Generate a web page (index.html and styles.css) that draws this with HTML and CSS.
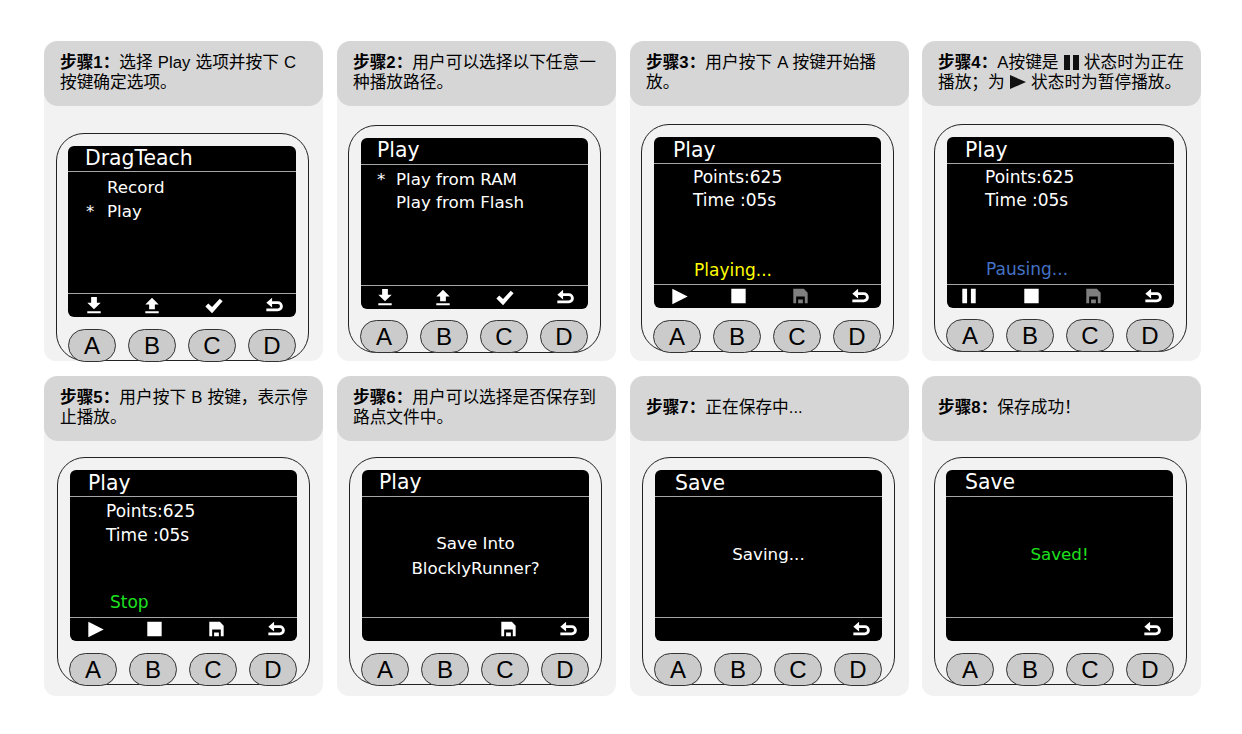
FILE: index.html
```html
<!DOCTYPE html>
<html lang="zh-CN">
<head>
<meta charset="utf-8">
<title>DragTeach</title>
<link rel="stylesheet" href="styles.css">
</head>
<body>
<svg class="sprite" aria-hidden="true">
  <symbol id="i-down" viewBox="0 0 24 24"><path d="M9 3h6v6h4l-7 7-7-7h4zM5 18h14v2H5z"/></symbol>
  <symbol id="i-up" viewBox="0 0 24 24"><path d="M12 4l7 7h-4v5H9v-5H5zM5 18h14v2H5z"/></symbol>
  <symbol id="i-check" viewBox="0 0 24 24"><path d="M3 13l3-3 4 3.500L18 5l3 2.500L10 20z"/></symbol>
  <symbol id="i-back" viewBox="0 0 24 24"><path d="M10 4v3.500h6a5.200 5.200 0 0 1 0 10.500H4v-3h12a2.200 2.200 0 0 0 0-4.500h-6V14L4 9z"/></symbol>
  <symbol id="i-play" viewBox="0 0 24 24"><path d="M4 4l16 8-16 8z"/></symbol>
  <symbol id="i-stop" viewBox="0 0 24 24"><path d="M5 4h15v15H5z"/></symbol>
  <symbol id="i-pause" viewBox="0 0 24 24"><path d="M5 4h5v15H5zM14 4h5v15h-5z"/></symbol>
  <symbol id="i-save" viewBox="0 0 24 24"><path fill-rule="evenodd" d="M5 4h11l4 4v11H5zM8 12v7h9v-7zM10 15h5v4h-5z"/></symbol>
  <symbol id="i-hpause" viewBox="0 0 15 15"><path d="M0 0h6v15H0zM9 0h6v15H9z"/></symbol>
  <symbol id="i-hplay" viewBox="0 0 16 14"><path d="M0 0l16 7-16 7z"/></symbol>
</svg>

<main class="board">

<section class="card">
  <div class="head"><p><b>步骤1：</b>选择 Play 选项并按下 C<br>按键确定选项。</p></div>
  <div class="device d1">
    <div class="screen">
      <div class="title t1">DragTeach</div>
      <div class="body b1">
        <div class="line"><span class="star"></span>Record</div>
        <div class="line"><span class="star">*</span>Play</div>
      </div>
      <div class="keys">
        <svg class="key"><use href="#i-down"/></svg>
        <svg class="key"><use href="#i-up"/></svg>
        <svg class="key"><use href="#i-check"/></svg>
        <svg class="key"><use href="#i-back"/></svg>
      </div>
    </div>
    <div class="buttons"><span class="btn">A</span><span class="btn">B</span><span class="btn">C</span><span class="btn">D</span></div>
  </div>
</section>

<section class="card">
  <div class="head"><p><b>步骤2：</b>用户可以选择以下任意一<br>种播放路径。</p></div>
  <div class="device d2">
    <div class="screen">
      <div class="title t2">Play</div>
      <div class="body b2">
        <div class="line"><span class="star">*</span>Play from RAM</div>
        <div class="line"><span class="star"></span>Play from Flash</div>
      </div>
      <div class="keys">
        <svg class="key"><use href="#i-down"/></svg>
        <svg class="key"><use href="#i-up"/></svg>
        <svg class="key"><use href="#i-check"/></svg>
        <svg class="key"><use href="#i-back"/></svg>
      </div>
    </div>
    <div class="buttons"><span class="btn">A</span><span class="btn">B</span><span class="btn">C</span><span class="btn">D</span></div>
  </div>
</section>

<section class="card">
  <div class="head"><p><b>步骤3：</b>用户按下 A 按键开始播<br>放。</p></div>
  <div class="device d3">
    <div class="screen">
      <div class="title t3">Play</div>
      <div class="body b3">
        <div class="line">Points:625</div>
        <div class="line">Time :05s</div>
        <div class="status yellow">Playing...</div>
      </div>
      <div class="keys">
        <svg class="key"><use href="#i-play"/></svg>
        <svg class="key"><use href="#i-stop"/></svg>
        <svg class="key dim"><use href="#i-save"/></svg>
        <svg class="key"><use href="#i-back"/></svg>
      </div>
    </div>
    <div class="buttons"><span class="btn">A</span><span class="btn">B</span><span class="btn">C</span><span class="btn">D</span></div>
  </div>
</section>

<section class="card">
  <div class="head"><p><b>步骤4：</b>A按键是 <svg class="inline"><use href="#i-hpause"/></svg> 状态时为正在<br>播放；为 <svg class="inline wide"><use href="#i-hplay"/></svg> 状态时为暂停播放。</p></div>
  <div class="device d4">
    <div class="screen">
      <div class="title t4">Play</div>
      <div class="body b3 b4">
        <div class="line">Points:625</div>
        <div class="line">Time :05s</div>
        <div class="status blue">Pausing...</div>
      </div>
      <div class="keys">
        <svg class="key nudge"><use href="#i-pause"/></svg>
        <svg class="key"><use href="#i-stop"/></svg>
        <svg class="key dim"><use href="#i-save"/></svg>
        <svg class="key"><use href="#i-back"/></svg>
      </div>
    </div>
    <div class="buttons"><span class="btn">A</span><span class="btn">B</span><span class="btn">C</span><span class="btn">D</span></div>
  </div>
</section>

<section class="card">
  <div class="head"><p><b>步骤5：</b>用户按下 B 按键，表示停<br>止播放。</p></div>
  <div class="device d5">
    <div class="screen">
      <div class="title t5">Play</div>
      <div class="body b5">
        <div class="line">Points:625</div>
        <div class="line">Time :05s</div>
        <div class="status green">Stop</div>
      </div>
      <div class="keys">
        <svg class="key"><use href="#i-play"/></svg>
        <svg class="key"><use href="#i-stop"/></svg>
        <svg class="key"><use href="#i-save"/></svg>
        <svg class="key"><use href="#i-back"/></svg>
      </div>
    </div>
    <div class="buttons"><span class="btn">A</span><span class="btn">B</span><span class="btn">C</span><span class="btn">D</span></div>
  </div>
</section>

<section class="card">
  <div class="head"><p><b>步骤6：</b>用户可以选择是否保存到<br>路点文件中。</p></div>
  <div class="device d6">
    <div class="screen">
      <div class="title t6">Play</div>
      <div class="body centered">
        <div class="line2">Save Into</div>
        <div class="line2">BlocklyRunner?</div>
      </div>
      <div class="keys">
        <span class="key"></span>
        <span class="key"></span>
        <svg class="key"><use href="#i-save"/></svg>
        <svg class="key"><use href="#i-back"/></svg>
      </div>
    </div>
    <div class="buttons"><span class="btn">A</span><span class="btn">B</span><span class="btn">C</span><span class="btn">D</span></div>
  </div>
</section>

<section class="card">
  <div class="head"><p><b>步骤7：</b>正在保存中...</p></div>
  <div class="device d7">
    <div class="screen">
      <div class="title t7">Save</div>
      <div class="body centered solo">
        <div class="line2">Saving...</div>
      </div>
      <div class="keys">
        <span class="key"></span>
        <span class="key"></span>
        <span class="key"></span>
        <svg class="key"><use href="#i-back"/></svg>
      </div>
    </div>
    <div class="buttons"><span class="btn">A</span><span class="btn">B</span><span class="btn">C</span><span class="btn">D</span></div>
  </div>
</section>

<section class="card">
  <div class="head"><p><b>步骤8：</b>保存成功！</p></div>
  <div class="device d8">
    <div class="screen">
      <div class="title t8">Save</div>
      <div class="body centered solo">
        <div class="line2 green">Saved!</div>
      </div>
      <div class="keys">
        <span class="key"></span>
        <span class="key"></span>
        <span class="key"></span>
        <svg class="key"><use href="#i-back"/></svg>
      </div>
    </div>
    <div class="buttons"><span class="btn">A</span><span class="btn">B</span><span class="btn">C</span><span class="btn">D</span></div>
  </div>
</section>

</main>
</body>
</html>
```
FILE: styles.css
```css
* { box-sizing: border-box; }
html, body { margin: 0; padding: 0; background: #fff; }
body { width: 1242px; height: 734px; overflow: hidden; font-family: "Liberation Sans", "Noto Sans CJK SC", sans-serif; color: #000; }
.sprite { display: none; }

.board {
  display: grid;
  grid-template-columns: repeat(4, 279px);
  grid-template-rows: repeat(2, 320px);
  column-gap: 14px;
  row-gap: 15px;
  padding: 41px 0 0 44px;
}

.card { background: #f2f2f2; border-radius: 12px; width: 279px; }
.card:nth-child(4n) { margin-left: -1px; }

.head {
  height: 65px;
  background: #d6d6d6;
  border-radius: 14px;
  padding: 0 16px;
  display: flex;
  align-items: center;
  font-size: 16.700px;
  line-height: 20px;
  word-spacing: 0.500px;
}
.head p { margin: -1px 0 0; white-space: nowrap; }
.head b { font-weight: 700; }
.inline { width: 15px; height: 15px; vertical-align: -2px; fill: #111; }
.wide { width: 16px; height: 14px; vertical-align: -1px; }

.device {
  width: 253px;
  height: 228px;
  border: 1px solid #222;
  border-radius: 28px;
  padding: 12px 11px 0;
}
.d1 { margin: 27px 0 0 12px; }
.d2 { margin: 19px 0 0 11px; }
.d3 { margin: 18px 0 0 11px; }
.d4 { margin: 18px 0 0 12px; }
.d5 { margin: 16px 0 0 13px; }
.d6 { margin: 16px 0 0 12px; }
.d7 { margin: 16px 0 0 12px; }
.d8 { margin: 16px 0 0 12px; }

.screen {
  width: 227px;
  height: 171px;
  margin-left: 1px;
  background: #000;
  border-radius: 6px;
  color: #fff;
  display: flex;
  flex-direction: column;
  overflow: hidden;
  font-family: "DejaVu Sans", sans-serif;
  font-size: 16.700px;
}
.d1 .screen { width: 228px; margin-left: 0; }
.d8 .screen { margin-left: 0; }

.title {
  height: 27px;
  flex: none;
  border-bottom: 1px solid #a6a6a6;
  font-size: 20.400px;
  line-height: 25px;
  padding-left: 16px;
}
.t1 { height: 26px; padding-left: 17px; }
.t3 { padding-left: 19px; line-height: 27px; }
.t4 { padding-left: 18px; line-height: 27px; }
.t5 { padding-left: 18px; line-height: 27px; }
.t6 { padding-left: 17px; }
.t7 { padding-left: 20px; line-height: 27px; }
.t8 { padding-left: 19px; }

.body { flex: 1; display: flex; flex-direction: column; min-height: 0; }
.line { line-height: 24px; white-space: nowrap; display: flex; }
.star { width: 39px; padding-left: 18px; flex: none; }
.b1 { padding-top: 3px; }
.b2 { padding-top: 3px; }
.b2 .line { line-height: 23px; }
.b2 .star { width: 35px; padding-left: 16px; }
.b3 { padding: 2px 0 2px 39px; font-size: 17px; }
.b4 { padding: 2px 0 3px 38px; }
.b3 .line { line-height: 23px; }
.b5 { padding: 2px 0 3px 36px; font-size: 17px; }
.status { margin-top: auto; line-height: 24px; padding-left: 1px; }
.b5 .status { padding-left: 4px; }
.yellow { color: #ffff00; }
.blue { color: #4472c4; }
.green { color: #1fe01f; }

.centered { align-items: center; justify-content: center; padding-bottom: 2px; }
.solo { padding-bottom: 5px; }
.line2 { line-height: 25px; }

.keys {
  flex: none;
  height: 24px;
  border-top: 1px solid #a6a6a6;
  display: grid;
  grid-template-columns: 60px 56px 68px 52px;
  margin: 0 -9px 0 -4px;
}
.d2 .keys { margin-left: -6px; }
.key { display: block; width: 24px; height: 23px; justify-self: center; fill: #fff; overflow: visible; }
.nudge { margin-right: 8px; }
.dim { fill: #7f7f7f; }

.buttons { display: flex; gap: 12px; margin-top: 12px; }
.d2 .buttons, .d4 .buttons { margin-top: 11px; }
.btn {
  width: 48px;
  height: 33px;
  background: #cbcbcb;
  border: 1px solid #333;
  border-radius: 16.500px;
  font-family: "Liberation Sans", sans-serif;
  font-size: 24px;
  line-height: 32px;
  text-align: center;
}
```
